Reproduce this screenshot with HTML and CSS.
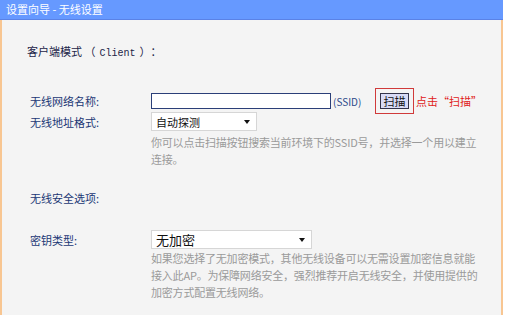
FILE: index.html
```html
<!DOCTYPE html>
<html lang="zh-CN">
<head>
  <meta charset="UTF-8">
  <title>设置向导 - 无线设置</title>
  <link rel="stylesheet" href="styles.css">
</head>
<body>

  <div class="page">
    <div class="title">设置向导 - 无线设置</div>

    <div class="content">
      <p class="mode">客户端模式 （<span class="mono">Client</span>）：</p>

      <div class="row row-ssid">
        <label class="label">无线网络名称:</label>
        <input class="text-input" type="text">
        <span class="unit">(SSID)</span>
        <span class="scan-box"><button class="scan-btn" type="button">扫描</button></span>
        <span class="tip">点击“扫描”</span>
      </div>

      <div class="row row-mac">
        <label class="label">无线地址格式:</label>
        <div class="select select-mac">
          <span>自动探测</span>
          <span class="arrow"></span>
        </div>
      </div>

      <p class="hint hint-scan">你可以点击扫描按钮搜索当前环境下的SSID号，并选择一个用以建立<br>连接。</p>

      <p class="section">无线安全选项:</p>

      <div class="row row-key">
        <label class="label">密钥类型:</label>
        <div class="select select-key">
          <span>无加密</span>
          <span class="arrow"></span>
        </div>
      </div>

      <p class="hint hint-key">如果您选择了无加密模式，其他无线设备可以无需设置加密信息就能<br>接入此AP。为保障网络安全，强烈推荐开启无线安全，并使用提供的<br>加密方式配置无线网络。</p>
    </div>
  </div>

</body>
</html>
```

FILE: styles.css
```css
body {
  margin: 0;
  background: #fff;
  font-family: "Noto Sans CJK SC", "Liberation Sans", sans-serif;
  font-size: 11px;
  color: #222;
  text-spacing-trim: space-all;
}
p {
  margin: 0;
}
.page {
  width: 503px;
}
.title {
  height: 19px;
  line-height: 19px;
  padding-left: 6px;
  background: #6699ff;
  border-bottom: 1px solid #5a82e6;
  color: #fff;
  font-size: 11px;
}
.content {
  height: 295px;
  box-sizing: border-box;
  padding-left: 25px;
  background: #f4f4f4;
  border-left: 2px solid #f8c692;
  border-right: 2px solid #f8c692;
  overflow: hidden;
}
.mode {
  margin-top: 23px;
  line-height: 16px;
  color: #1c2448;
}
.mono {
  margin: 0 4px;
  font-family: "Liberation Mono", monospace;
  font-size: 10px;
}
.row {
  display: flex;
  align-items: center;
  margin-left: 3px;
}
.row-ssid {
  margin-top: 30px;
  height: 18px;
}
.row-mac {
  margin-top: 2px;
}
.row-key {
  margin-top: 23px;
}
.label {
  width: 121px;
  flex-shrink: 0;
  color: #1b3775;
}
.text-input {
  width: 180px;
  height: 16px;
  box-sizing: border-box;
  margin: 0;
  padding: 0 2px;
  border: 1px solid #2b3f78;
  background: #fff;
}
.unit {
  width: 42px;
  margin-left: 2px;
  color: #2c4a8a;
  font-size: 10px;
}
.scan-box {
  display: flex;
  margin: -4px 0;
  padding: 4px;
  border: 1px solid #d03a3a;
}
.scan-btn {
  width: 29px;
  height: 16px;
  padding: 0;
  border: 1px solid #33334a;
  background: #d8dbf6;
  font-family: inherit;
  font-size: 11px;
  line-height: 14px;
  color: #111;
}
.tip {
  margin-left: 2px;
  color: #e02020;
}
.select {
  position: relative;
  height: 19px;
  box-sizing: border-box;
  padding-left: 4px;
  border: 1px solid #d6d6d6;
  background: #fff;
  display: flex;
  align-items: center;
  color: #111;
}
.select-mac {
  width: 106px;
}
.select-key {
  width: 161px;
  font-size: 13px;
}
.arrow {
  position: absolute;
  right: 6px;
  top: 7px;
  border-left: 3px solid transparent;
  border-right: 3px solid transparent;
  border-top: 4px solid #111;
}
.hint {
  margin-left: 124px;
  line-height: 17px;
  color: #9a9a9a;
  white-space: nowrap;
  letter-spacing: -0.2px;
}
.hint-scan {
  margin-top: 3px;
}
.hint-key {
  margin-top: 1px;
}
.section {
  margin-top: 22px;
  margin-left: 3px;
  line-height: 17px;
  color: #1b3775;
}
```
